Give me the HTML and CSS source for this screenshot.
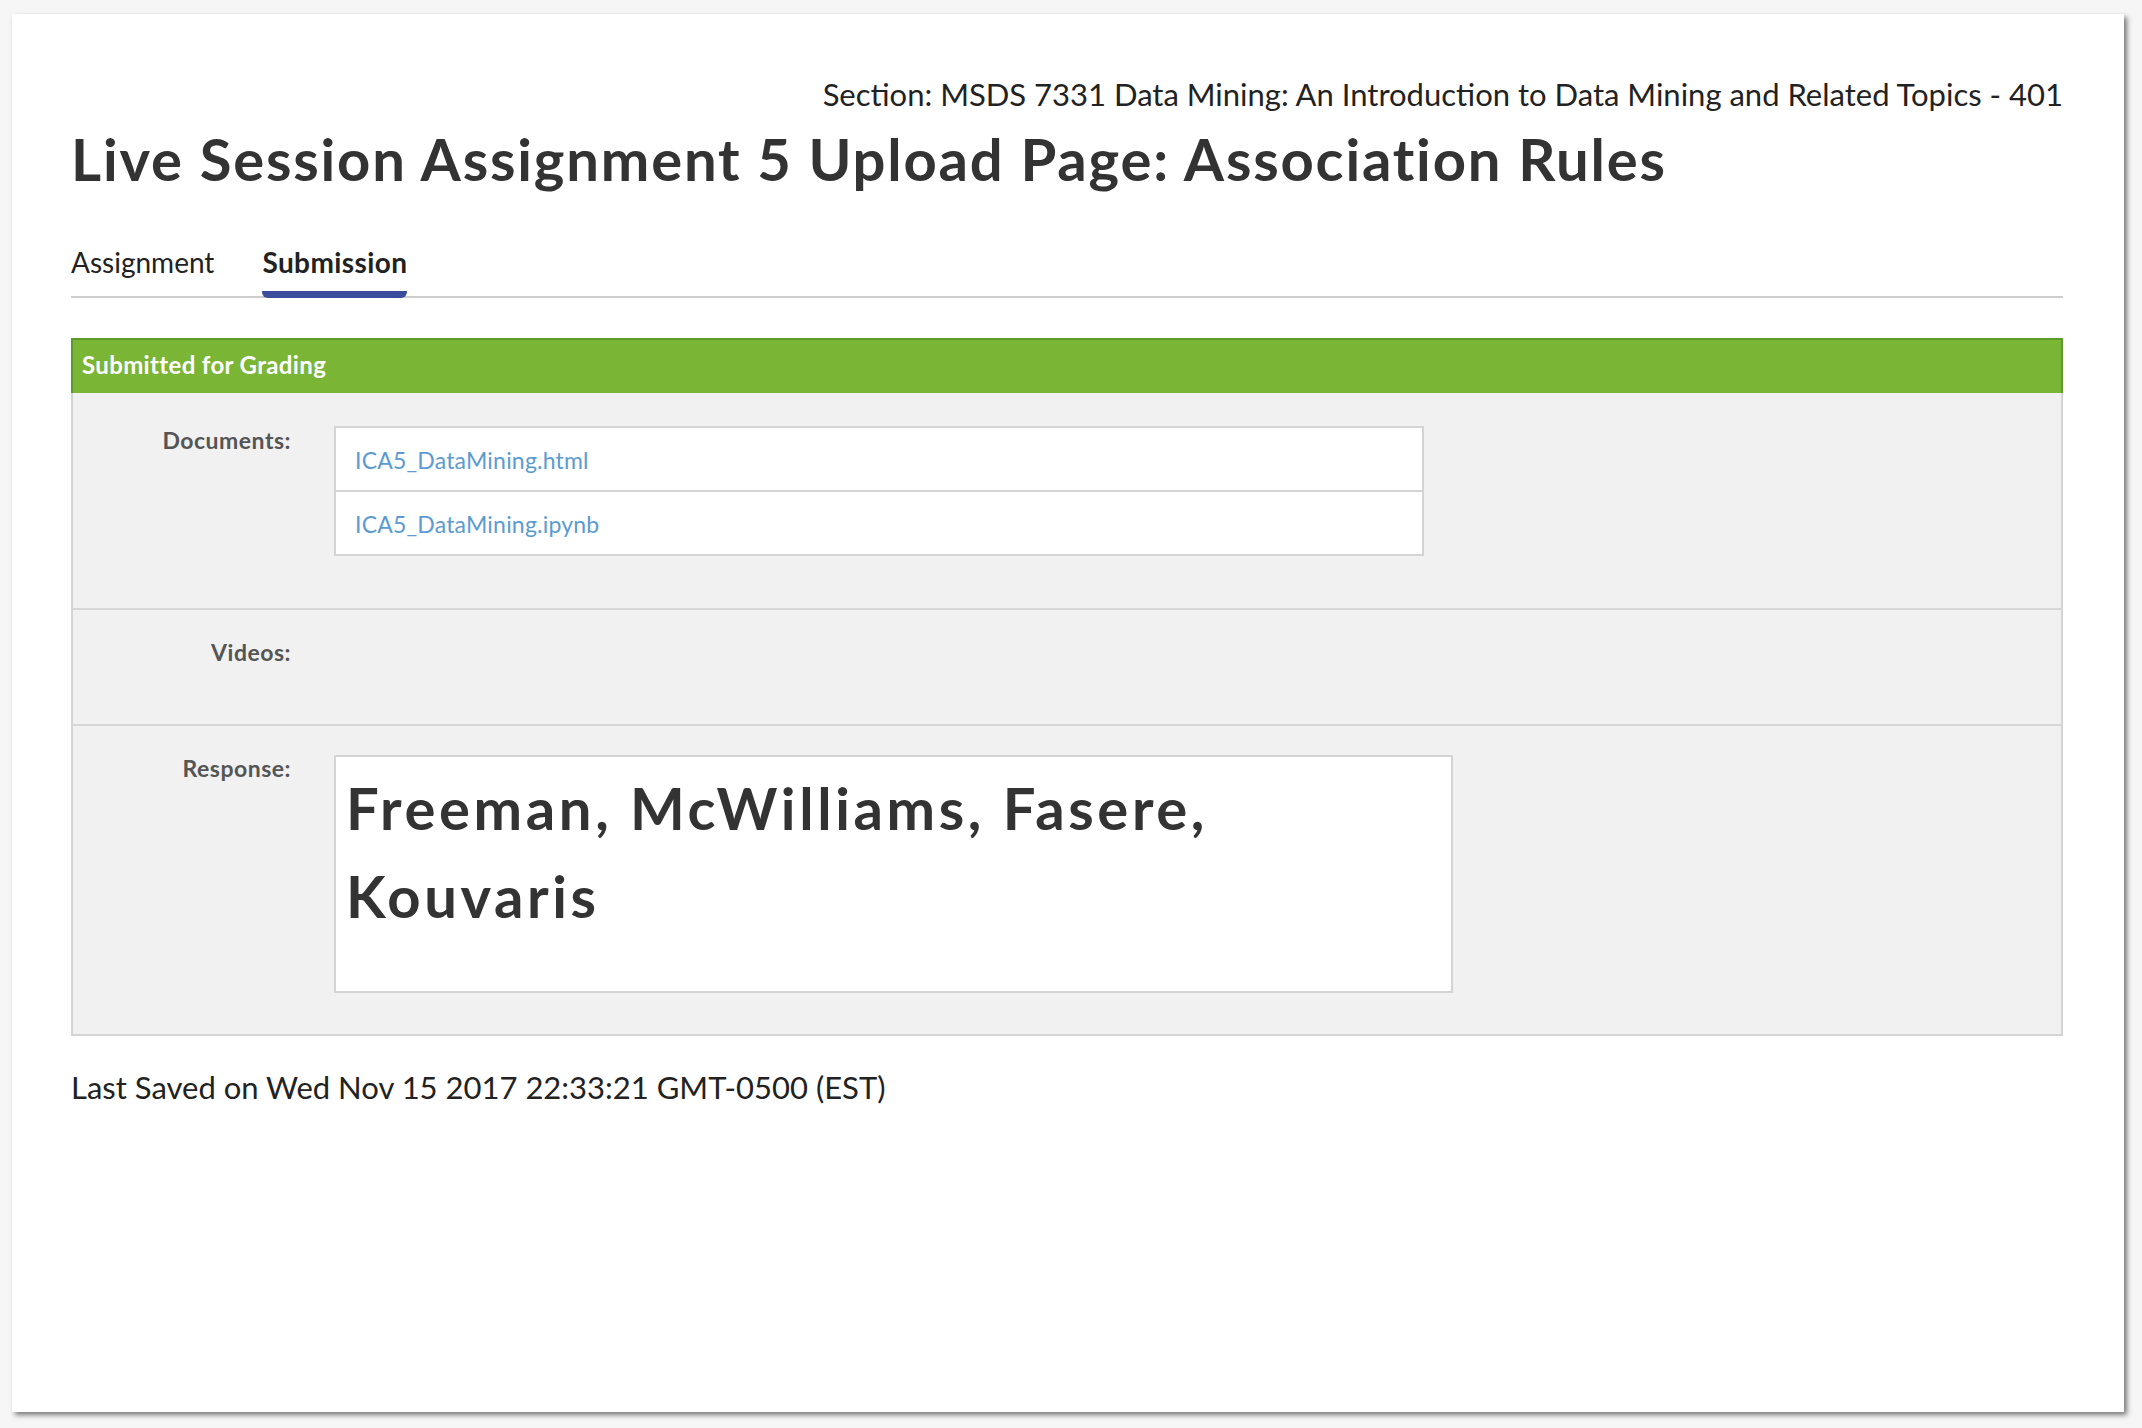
FILE: index.html
```html
<!DOCTYPE html>
<html lang="en">
<head>
<meta charset="utf-8">
<title>Live Session Assignment 5 Upload Page</title>
<link rel="stylesheet" href="styles.css">
</head>
<body>
<div class="card">
  <div class="section">Section: MSDS 7331 Data Mining: An Introduction to Data Mining and Related Topics - 401</div>
  <h1 class="title">Live Session Assignment 5 Upload Page: Association Rules</h1>
  <div class="tabs">
    <span class="tab">Assignment</span>
    <span class="tab active">Submission</span>
  </div>
  <div class="status">Submitted for Grading</div>
  <div class="panel">
    <div class="row row-docs">
      <div class="label">Documents:</div>
      <div class="docs">
        <a class="doc" href="#">ICA5_DataMining.html</a>
        <a class="doc" href="#">ICA5_DataMining.ipynb</a>
      </div>
    </div>
    <div class="row row-videos">
      <div class="label">Videos:</div>
      <div></div>
    </div>
    <div class="row row-response">
      <div class="label">Response:</div>
      <div class="response"><p>Freeman, McWilliams, Fasere, Kouvaris</p></div>
    </div>
  </div>
  <div class="saved">Last Saved on Wed Nov 15 2017 22:33:21 GMT-0500 (EST)</div>
</div>
</body>
</html>
```
FILE: styles.css
```css
html, body {
  margin: 0;
  padding: 0;
  background: #f6f6f6;
}
body {
  font-family: "Lato", "Open Sans", sans-serif;
  color: #333;
  padding-top: 14px;
  height: 1428px;
  box-sizing: border-box;
  overflow: hidden;
}
.card {
  margin-left: 12px;
  width: 2112px;
  height: 1398px;
  box-sizing: border-box;
  background: #fff;
  box-shadow: 3px 3px 5px rgba(0, 0, 0, 0.5);
  padding: 60px 61px 0 59px;
}
.section {
  text-align: right;
  font-size: 31px;
  line-height: 40px;
  color: #222;
}
.title {
  margin: 10px 0 0;
  font-size: 58px;
  line-height: 70px;
  font-weight: 700;
  letter-spacing: 1.8px;
  color: #333;
}
.tabs {
  display: flex;
  gap: 48px;
  margin-top: 50px;
  border-bottom: 2px solid #cdcdcd;
}
.tab {
  font-size: 28px;
  line-height: 36px;
  padding-bottom: 16px;
  color: #222;
}
.tab.active {
  font-weight: 700;
  letter-spacing: 0.4px;
  position: relative;
}
.tab.active::after {
  content: "";
  position: absolute;
  left: 0;
  right: 0;
  bottom: -2px;
  height: 7px;
  background: #3a4d9c;
  border-radius: 0 0 6px 6px;
}
.status {
  margin-top: 40px;
  background: #7ab536;
  border: 2px solid #5d9a2c;
  border-bottom: 0;
  color: #fff;
  font-weight: 700;
  font-size: 24px;
  letter-spacing: 0.35px;
  line-height: 49px;
  padding: 0 0 4px 9px;
}
.panel {
  background: #f1f1f1;
  border: 2px solid #d4d4d4;
  border-top: 0;
}
.row {
  display: grid;
  grid-template-columns: 218px 1fr;
  column-gap: 43px;
  align-items: start;
}
.row + .row {
  border-top: 2px solid #d6d6d6;
}
.label {
  text-align: right;
  font-weight: 700;
  font-size: 23px;
  letter-spacing: 0.5px;
  line-height: 30px;
  color: #555;
}
.row-docs {
  padding: 33px 0 52px;
}
.row-docs .label {
  margin-top: -1px;
}
.docs {
  width: 1086px;
  background: #fff;
  border: 2px solid #d4d4d4;
  display: flex;
  flex-direction: column;
}
.doc {
  display: block;
  color: #5b9bd1;
  text-decoration: none;
  font-size: 23px;
  letter-spacing: 0.2px;
  line-height: 58px;
  padding: 3px 0 1px 19px;
}
.doc + .doc {
  border-top: 2px solid #d4d4d4;
}
.row-videos {
  height: 116px;
  box-sizing: border-box;
  padding-top: 27px;
}
.row-response {
  padding: 29px 0 41px;
}
.row-response .label {
  margin-top: -2px;
}
.response {
  width: 1119px;
  height: 238px;
  box-sizing: border-box;
  background: #fff;
  border: 2px solid #d4d4d4;
  padding: 7px 10px 6px;
}
.response p {
  margin: 0;
  width: 1000px;
  font-size: 58px;
  line-height: 88px;
  font-weight: 700;
  letter-spacing: 3.6px;
  color: #333;
}
.saved {
  margin-top: 31px;
  font-size: 31px;
  line-height: 40px;
  color: #222;
}
```
